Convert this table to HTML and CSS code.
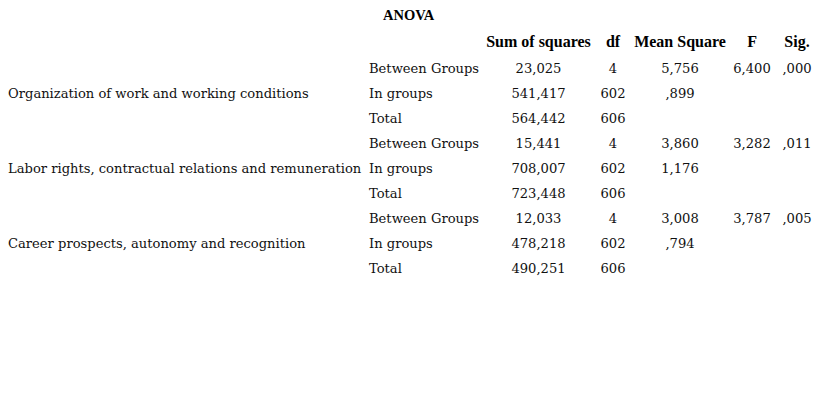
FILE: index.html
```html
<!DOCTYPE html>
<html>
<head>
<meta charset="utf-8">
<link rel="stylesheet" href="styles.css">
</head>
<body>
<table class="anova">
  <colgroup>
    <col class="c-var"><col class="c-src"><col class="c-ss"><col class="c-df"><col class="c-ms"><col class="c-f"><col class="c-sig">
  </colgroup>
  <tr class="title-row"><td></td><td class="title" colspan="2">ANOVA</td><td></td><td></td><td></td><td></td></tr>
  <tr class="head-row"><th></th><th></th><th>Sum of squares</th><th>df</th><th>Mean Square</th><th>F</th><th>Sig.</th></tr>
  <tr><td></td><td>Between Groups</td><td class="n">23,025</td><td class="n">4</td><td class="n">5,756</td><td class="n">6,400</td><td class="n">,000</td></tr>
  <tr><td>Organization of work and working conditions</td><td>In groups</td><td class="n">541,417</td><td class="n">602</td><td class="n">,899</td><td></td><td></td></tr>
  <tr><td></td><td>Total</td><td class="n">564,442</td><td class="n">606</td><td></td><td></td><td></td></tr>
  <tr><td></td><td>Between Groups</td><td class="n">15,441</td><td class="n">4</td><td class="n">3,860</td><td class="n">3,282</td><td class="n">,011</td></tr>
  <tr><td>Labor rights, contractual relations and remuneration</td><td>In groups</td><td class="n">708,007</td><td class="n">602</td><td class="n">1,176</td><td></td><td></td></tr>
  <tr><td></td><td>Total</td><td class="n">723,448</td><td class="n">606</td><td></td><td></td><td></td></tr>
  <tr><td></td><td>Between Groups</td><td class="n">12,033</td><td class="n">4</td><td class="n">3,008</td><td class="n">3,787</td><td class="n">,005</td></tr>
  <tr><td>Career prospects, autonomy and recognition</td><td>In groups</td><td class="n">478,218</td><td class="n">602</td><td class="n">,794</td><td></td><td></td></tr>
  <tr><td></td><td>Total</td><td class="n">490,251</td><td class="n">606</td><td></td><td></td><td></td></tr>
</table>
</body>
</html>
```
FILE: styles.css
```css
html, body {
  margin: 0;
  background: #fff;
}
body {
  padding: 0 8px;
  font-family: "DejaVu Serif", serif;
  font-size: 13.1px;
  color: #111;
}
.anova {
  border-collapse: collapse;
  table-layout: fixed;
  width: 810px;
}
.anova td, .anova th {
  padding: 0;
  white-space: nowrap;
  overflow: visible;
}
.c-var { width: 361px; }
.c-src { width: 114px; }
.c-ss { width: 111px; }
.c-df { width: 38px; }
.c-ms { width: 96px; }
.c-f { width: 48px; }
.c-sig { width: 42px; }

.anova tr { height: 25px; }
.anova td {
  vertical-align: top;
  height: 25px;
  line-height: 25px;
}
.title-row td { height: 31px; line-height: 31px; }
.title {
  font-family: "Liberation Serif", serif;
  font-weight: bold;
  font-size: 14.5px;
  color: #000;
  padding-left: 14px !important;
}
.head-row { height: 22px; }
.head-row th {
  height: 22px;
  line-height: 22px;
  padding-top: 0;
  font-family: "Liberation Serif", serif;
  font-weight: bold;
  font-size: 16px;
  color: #000;
  text-align: center;
  vertical-align: top;
}
.n { text-align: center; }
```
